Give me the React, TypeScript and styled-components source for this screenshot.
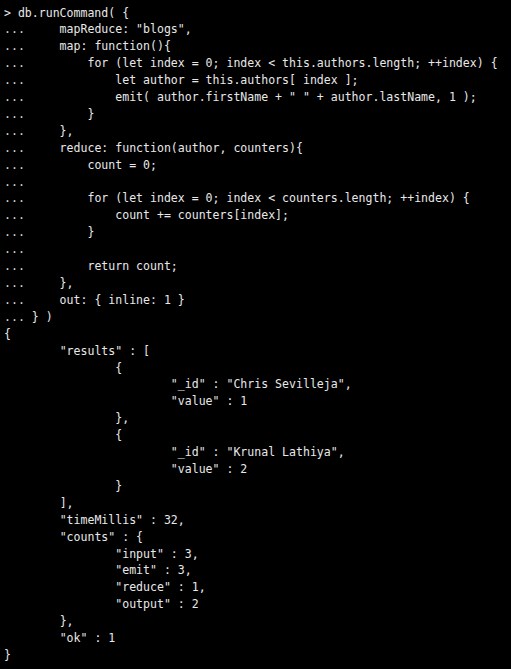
import React from "react";
import styled, { createGlobalStyle } from "styled-components";

const Global = createGlobalStyle`
  html, body {
    margin: 0;
    padding: 0;
    background: #000000;
    overflow: hidden;
  }
`;

const Screen = styled.div`
  width: 511px;
  height: 669px;
  background: #000000;
  color: #e8e8e8;
  font-family: "DejaVu Sans Mono", "Liberation Mono", monospace;
  font-size: 11.56px;
  line-height: 16.92px;
  padding: 4.5px 0 0 4px;
  box-sizing: border-box;
  overflow: hidden;
  tab-size: 8;
  -moz-tab-size: 8;
`;

const Line = styled.div`
  white-space: pre;
  height: 16.92px;
`;

const Cont = styled.span`
  color: #d8d8d8;
`;

const input: Array<[boolean, string]> = [
  [false, "> db.runCommand( {"],
  [true, "     mapReduce: \"blogs\","],
  [true, "     map: function(){"],
  [true, "         for (let index = 0; index < this.authors.length; ++index) {"],
  [true, "             let author = this.authors[ index ];"],
  [true, "             emit( author.firstName + \" \" + author.lastName, 1 );"],
  [true, "         }"],
  [true, "     },"],
  [true, "     reduce: function(author, counters){"],
  [true, "         count = 0;"],
  [true, ""],
  [true, "         for (let index = 0; index < counters.length; ++index) {"],
  [true, "             count += counters[index];"],
  [true, "         }"],
  [true, ""],
  [true, "         return count;"],
  [true, "     },"],
  [true, "     out: { inline: 1 }"],
  [true, " } )"],
];

const output: string[] = [
  "{",
  "\t\"results\" : [",
  "\t\t{",
  "\t\t\t\"_id\" : \"Chris Sevilleja\",",
  "\t\t\t\"value\" : 1",
  "\t\t},",
  "\t\t{",
  "\t\t\t\"_id\" : \"Krunal Lathiya\",",
  "\t\t\t\"value\" : 2",
  "\t\t}",
  "\t],",
  "\t\"timeMillis\" : 32,",
  "\t\"counts\" : {",
  "\t\t\"input\" : 3,",
  "\t\t\"emit\" : 3,",
  "\t\t\"reduce\" : 1,",
  "\t\t\"output\" : 2",
  "\t},",
  "\t\"ok\" : 1",
  "}",
];

export default function App() {
  return (
    <>
      <Global />
      <Screen>
        {input.map(([cont, text], i) => (
          <Line key={"i" + i}>
            {cont && <Cont>...</Cont>}
            {text}
          </Line>
        ))}
        {output.map((text, i) => (
          <Line key={"o" + i}>{text}</Line>
        ))}
      </Screen>
    </>
  );
}
